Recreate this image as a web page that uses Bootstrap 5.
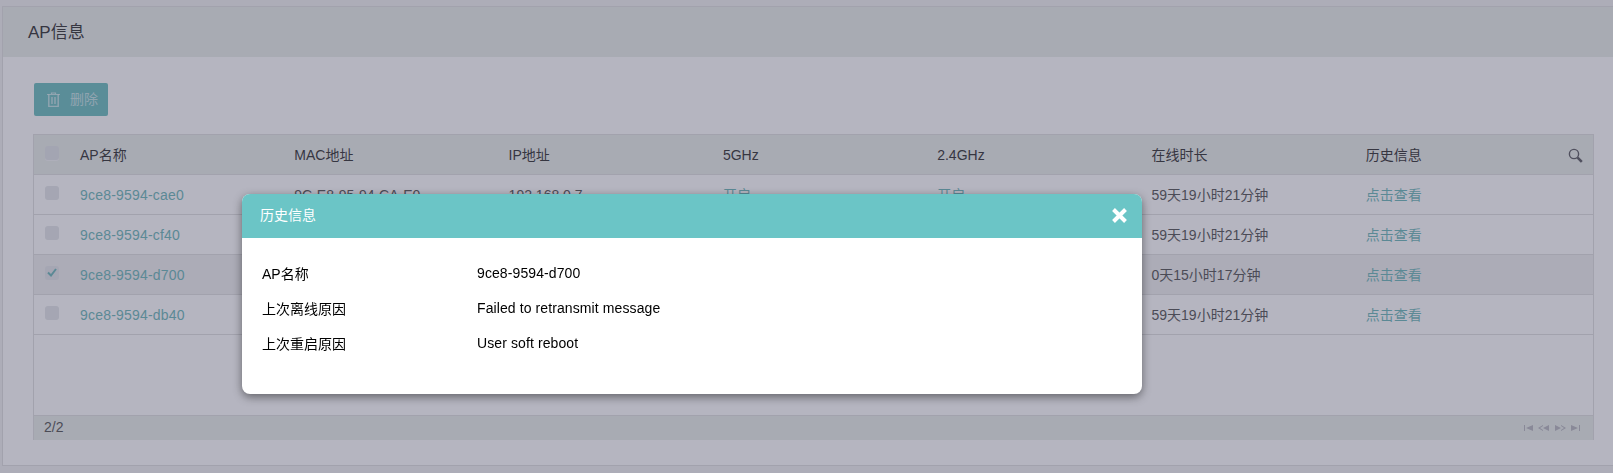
<!DOCTYPE html>
<html lang="zh">
<head>
<meta charset="utf-8">
<title>AP信息</title>
<link rel="stylesheet" href="https://cdn.jsdelivr.net/npm/bootstrap@5.3.0/dist/css/bootstrap.min.css">
<style>
html,body{height:100%;}
body{background:#f3f3f2;font-family:"Liberation Sans","Noto Sans CJK SC",sans-serif;font-size:14px;color:#555;overflow:hidden;padding:6px 0 0 2px;}
.ap-panel{background:#fff;border:1px solid #e0e0e0;border-right:0;height:460px;}
.ap-head{height:50px;background:#ebefeb;padding:0 25px;font-size:17px;line-height:51px;color:#333;}
.ap-body{padding:26px 19px 0 30px;}
.ap-del{background:#6dbebf;color:rgba(255,255,255,.6);border:0;border-radius:2px;height:33px;width:74px;font-size:14px;padding:0 0 0 13px;gap:10px;margin-left:1px;}
.ap-grid{margin-top:18px;border:1px solid #e0e0e0;height:306px;}
.ap-grid .table{table-layout:fixed;margin:0;--bs-table-bg:transparent;color:#555;font-size:14px;}
.ap-grid th,.ap-grid td{height:40px;padding:2px 0 0;vertical-align:middle;font-weight:400;border-bottom:1px solid #e0e0e0;border-top:0;}
.ap-grid th{height:39px;}
.ap-grid thead th{background:#ebefeb;color:#333;}
.ap-grid tr.ap-sel td{background:#f0f0f0;}
.ap-grid a{color:#6fb8ba;text-decoration:none;}
.ap-latin{letter-spacing:.2px;}
.ap-box{display:block;width:14px;height:14px;margin-left:11px;margin-top:-5px;background:#e5e7ea;border-radius:3px;}
thead .ap-box{background:#e3e5e8;box-shadow:0 1px 0 #f4f5f6;}
.ap-spacer{height:80px;}
.ap-foot{height:25px;background:#ebefeb;border-top:1px solid #e0e0e0;padding:0 13px 0 10px;color:#555;line-height:23px;}
.ap-pager{gap:5.5px;}
.ap-find{margin-right:2px;}
.ap-scr{background:rgb(60,60,90);opacity:.38;z-index:1040;}
.ap-modal{display:block;z-index:1050;}
.ap-dialog{width:900px;max-width:none;margin:194px 0 0 242px;}
.ap-content{border:0;border-radius:8px;box-shadow:0 3px 10px rgba(0,0,0,.45);color:#000;height:200px;overflow:hidden;}
.ap-mhead{height:44px;background:#6bc5c6;color:#fff;padding:0 15px 2px 18px;font-size:14px;}
.ap-mbody{padding:25px 20px 0;}
.ap-line{height:35px;}
.ap-k{width:215px;padding-top:1px;}
.ap-v{letter-spacing:.1px;}
.ap-close{background:none;border:0;padding:0;line-height:0;}
</style>
</head>
<body>
<div class="ap-panel">
  <div class="ap-head">AP信息</div>
  <div class="ap-body">
    <button class="ap-del d-flex align-items-center" type="button">
      <svg width="13" height="15" viewBox="0 0 13 15" fill="none" stroke="currentColor"><path d="M0 2.5h13M4.5 2.5V1h4v1.5" stroke-width="1.2"/><path d="M1.8 2.5v11.9h9.4V2.5M5 5v7M8 5v7" stroke-width="1.4"/></svg>
      <span>删除</span>
    </button>
    <div class="ap-grid">
      <table class="table">
        <colgroup><col style="width:46px"><col style="width:214.3px"><col style="width:214.3px"><col style="width:214.3px"><col style="width:214.3px"><col style="width:214.3px"><col style="width:214.3px"><col></colgroup>
        <thead><tr><th><span class="ap-box"></span></th><th>AP名称</th><th>MAC地址</th><th>IP地址</th><th>5GHz</th><th>2.4GHz</th><th>在线时长</th>
          <th><div class="d-flex justify-content-between align-items-center pe-2"><span>历史信息</span>
            <svg class="ap-find" width="15" height="15" viewBox="0 0 15 15" fill="none" stroke="#5c5c62"><circle cx="6" cy="6" r="4.6" stroke-width="1.4"/><path d="M9.6 9.6l4.2 4.2" stroke-width="2.6"/></svg></div></th></tr></thead>
        <tbody>
          <tr><td><span class="ap-box"></span></td><td><a class="ap-latin" href="#">9ce8-9594-cae0</a></td><td>9C-E8-95-94-CA-E0</td><td>192.168.0.7</td><td><a href="#">开启</a></td><td><a href="#">开启</a></td><td>59天19小时21分钟</td><td><a href="#">点击查看</a></td></tr>
          <tr><td><span class="ap-box"></span></td><td><a class="ap-latin" href="#">9ce8-9594-cf40</a></td><td></td><td></td><td></td><td></td><td>59天19小时21分钟</td><td><a href="#">点击查看</a></td></tr>
          <tr class="ap-sel"><td><span class="ap-box d-flex align-items-center justify-content-center"><svg width="10" height="9" viewBox="0 0 10 9" fill="none" stroke="#6fb8ba" stroke-width="2"><path d="M1 4.5l3 3L9 1"/></svg></span></td><td><a class="ap-latin" href="#">9ce8-9594-d700</a></td><td></td><td></td><td></td><td></td><td>0天15小时17分钟</td><td><a href="#">点击查看</a></td></tr>
          <tr><td><span class="ap-box"></span></td><td><a class="ap-latin" href="#">9ce8-9594-db40</a></td><td></td><td></td><td></td><td></td><td>59天19小时21分钟</td><td><a href="#">点击查看</a></td></tr>
        </tbody>
      </table>
      <div class="ap-spacer"></div>
      <div class="ap-foot d-flex justify-content-between align-items-center">
        <span>2/2</span>
        <span class="ap-pager d-flex align-items-center">
          <svg width="9" height="6" viewBox="0 0 9 6" fill="#b8b8be"><path d="M0 0h1v6H0zM9 0v6L2 3z"/></svg>
          <svg width="11" height="6" viewBox="0 0 11 6" fill="#b8b8be"><path d="M11 0v6L5 3zM5 0v1L2 3l3 2v1L0 3z"/></svg>
          <svg width="11" height="6" viewBox="0 0 11 6" fill="#b8b8be"><path d="M0 0v6l6-3zM6 0v1l3 2-3 2v1l5-3z"/></svg>
          <svg width="9" height="6" viewBox="0 0 9 6" fill="#b8b8be"><path d="M9 0H8v6h1zM0 0v6l7-3z"/></svg>
        </span>
      </div>
    </div>
  </div>
</div>
<div class="modal-backdrop ap-scr"></div>
<div class="modal ap-modal">
  <div class="modal-dialog ap-dialog">
    <div class="modal-content ap-content">
      <div class="ap-mhead d-flex justify-content-between align-items-center">
        <span>历史信息</span>
        <button class="ap-close" type="button" aria-label="关闭"><svg width="15" height="15" viewBox="0 0 15 15" stroke="#fff" stroke-width="4"><path d="M1.5 1.5l12 12M13.5 1.5l-12 12"/></svg></button>
      </div>
      <div class="ap-mbody">
        <div class="ap-line d-flex"><div class="ap-k">AP名称</div><div class="ap-v">9ce8-9594-d700</div></div>
        <div class="ap-line d-flex"><div class="ap-k">上次离线原因</div><div class="ap-v">Failed to retransmit message</div></div>
        <div class="ap-line d-flex"><div class="ap-k">上次重启原因</div><div class="ap-v">User soft reboot</div></div>
      </div>
    </div>
  </div>
</div>
<script src="https://cdn.jsdelivr.net/npm/bootstrap@5.3.0/dist/js/bootstrap.bundle.min.js"></script>
</body>
</html>
